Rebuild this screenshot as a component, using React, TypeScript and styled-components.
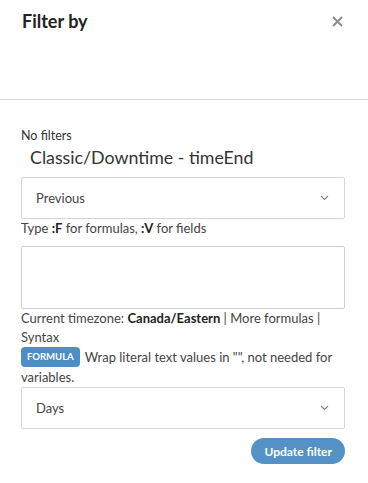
import styled, { createGlobalStyle } from "styled-components";

const GlobalStyle = createGlobalStyle`
  body {
    margin: 0;
    background: #fff;
    font-family: Lato, "Noto Sans", sans-serif;
    color: #333;
  }
`;

const Panel = styled.div`
  width: 368px;
  height: 483px;
  display: flex;
  flex-direction: column;
`;

const Header = styled.div`
  height: 100px;
  border-bottom: 1px solid #dcdcdc;
  display: flex;
  justify-content: space-between;
  align-items: flex-start;
  padding: 10px 25px 0 22px;
  box-sizing: border-box;
`;

const Title = styled.h2`
  margin: 0;
  font-size: 18px;
  font-weight: 700;
  color: #222;
  line-height: 22px;
`;

const CloseButton = styled.button`
  border: none;
  background: none;
  padding: 0;
  margin-top: 6px;
  cursor: pointer;
  display: flex;
`;

const Body = styled.div`
  padding: 28px 23px 0 21px;
  display: flex;
  flex-direction: column;
`;

const Small = styled.div`
  font-size: 12.5px;
  line-height: 16px;
  color: #333;
`;

const FieldName = styled.div`
  font-size: 17.8px;
  line-height: 26px;
  color: #333;
  padding-left: 9px;
  margin-bottom: 7px;
`;

const Select = styled.div`
  height: 42px;
  border: 1px solid #d6d6d6;
  border-radius: 2px;
  box-sizing: border-box;
  display: flex;
  align-items: center;
  justify-content: space-between;
  padding: 0 15px 0 14px;
  font-size: 13px;
  color: #444;
  cursor: pointer;
`;

const Hint = styled.div`
  font-size: 13px;
  line-height: 18px;
  color: #444;
  b {
    color: #222;
  }
`;

const TextArea = styled.textarea`
  height: 63px;
  border: 1px solid #cfcfcf;
  border-radius: 2px;
  box-sizing: border-box;
  resize: none;
  margin: 9px 0 0 0;
  font-family: inherit;
  display: block;
`;

const Info = styled.div<{ $lh: number }>`
  font-size: 13px;
  line-height: ${(p) => p.$lh}px;
  color: #444;
  b {
    color: #222;
    font-weight: 700;
  }
`;

const Badge = styled.span`
  display: inline-block;
  background: #4e8ec6;
  color: #fff;
  font-size: 9.5px;
  font-weight: 700;
  border-radius: 4px;
  padding: 0 6px;
  margin-right: 5px;
  height: 20px;
  line-height: 20px;
  vertical-align: top;
`;

const Footer = styled.div`
  display: flex;
  justify-content: flex-end;
  margin-top: 9px;
`;

const Button = styled.button`
  background: #5591c5;
  color: #fff;
  border: none;
  border-radius: 13px;
  height: 26px;
  padding: 0 13px;
  font-family: inherit;
  font-size: 12px;
  font-weight: 700;
  cursor: pointer;
`;

const Chevron = () => (
  <svg width="9" height="6" viewBox="0 0 9 6" fill="none">
    <path d="M1 1l3.5 3.5L8 1" stroke="#888" strokeWidth="1.2" />
  </svg>
);

export default function App() {
  return (
    <>
      <GlobalStyle />
      <Panel>
        <Header>
          <Title>Filter by</Title>
          <CloseButton aria-label="Close">
            <svg width="11" height="11" viewBox="0 0 11 11">
              <path d="M1 1l9 9M10 1l-9 9" stroke="#8a8a8a" strokeWidth="1.8" />
            </svg>
          </CloseButton>
        </Header>
        <Body>
          <Small>No filters</Small>
          <FieldName>Classic/Downtime - timeEnd</FieldName>
          <Select>
            Previous
            <Chevron />
          </Select>
          <Hint>
            Type <b>:F</b> for formulas, <b>:V</b> for fields
          </Hint>
          <TextArea />
          <Info $lh={19}>
            Current timezone: <b>Canada/Eastern</b> | More formulas | Syntax
          </Info>
          <Info $lh={20}>
            <Badge>FORMULA</Badge>
            Wrap literal text values in "", not needed for variables.
          </Info>
          <Select>
            Days
            <Chevron />
          </Select>
          <Footer>
            <Button>Update filter</Button>
          </Footer>
        </Body>
      </Panel>
    </>
  );
}
